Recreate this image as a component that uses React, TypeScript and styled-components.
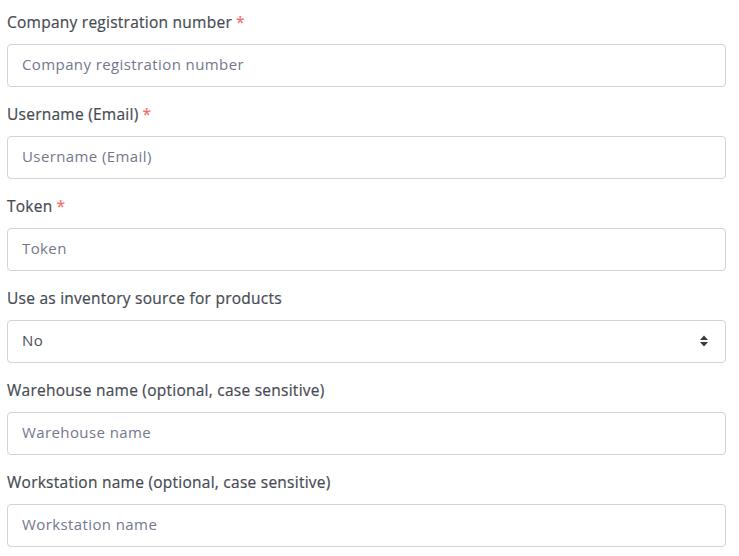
import React from "react";
import styled, { createGlobalStyle } from "styled-components";

const Global = createGlobalStyle`
  html, body { margin: 0; padding: 0; background: #fff; }
  body { font-family: "Open Sans", "Liberation Sans", sans-serif; }
  * { box-sizing: border-box; }
`;

const Form = styled.form`
  display: flex;
  flex-direction: column;
  padding: 12px 13px 0 7px;
`;

const Group = styled.div`
  display: flex;
  flex-direction: column;
  margin-bottom: 17px;
`;

const Label = styled.label`
  font-size: 15.5px;
  font-weight: 500;
  letter-spacing: 0.25px;
  line-height: 21px;
  color: #464a53;
  margin-bottom: 11px;
  -webkit-text-stroke: 0.2px #464a53;
`;

const Star = styled.span`
  color: #f46a6a;
  margin-left: 4px;
  -webkit-text-stroke: 0.2px #f46a6a;
`;

const Input = styled.input`
  height: 43px;
  width: 100%;
  border: 1px solid #ced4da;
  border-radius: 4px;
  padding: 0 14px 3px;
  font-family: inherit;
  font-size: 15px;
  letter-spacing: 0.4px;
  color: #495057;
  background: #fff;
  outline: none;
  &::placeholder { color: #74788d; opacity: 1; }
`;

const SelectBox = styled.div`
  position: relative;
  height: 43px;
  border: 1px solid #ced4da;
  border-radius: 4px;
  display: flex;
  align-items: center;
  padding: 0 14px 3px;
  font-size: 15px;
  letter-spacing: 0.4px;
  color: #495057;
`;

const Value = styled.span`
  flex: 1;
`;

const Caret = styled.svg`
  width: 10px;
  height: 12px;
  margin-right: 2px;
  margin-top: 2px;
`;

const fields: { label: string; placeholder?: string; required?: boolean; select?: string }[] = [
  { label: "Company registration number", placeholder: "Company registration number", required: true },
  { label: "Username (Email)", placeholder: "Username (Email)", required: true },
  { label: "Token", placeholder: "Token", required: true },
  { label: "Use as inventory source for products", select: "No" },
  { label: "Warehouse name (optional, case sensitive)", placeholder: "Warehouse name" },
  { label: "Workstation name (optional, case sensitive)", placeholder: "Workstation name" },
];

export default function App() {
  return (
    <>
      <Global />
      <Form>
        {fields.map((f) => (
          <Group key={f.label}>
            <Label>
              {f.label}
              {f.required && <Star>*</Star>}
            </Label>
            {f.select ? (
              <SelectBox>
                <Value>{f.select}</Value>
                <Caret viewBox="0 0 10 12">
                  <path d="M5 0.5 L9 5 L1 5 Z" fill="#343a40" />
                  <path d="M5 11.5 L9 7 L1 7 Z" fill="#343a40" />
                </Caret>
              </SelectBox>
            ) : (
              <Input placeholder={f.placeholder} />
            )}
          </Group>
        ))}
      </Form>
    </>
  );
}
